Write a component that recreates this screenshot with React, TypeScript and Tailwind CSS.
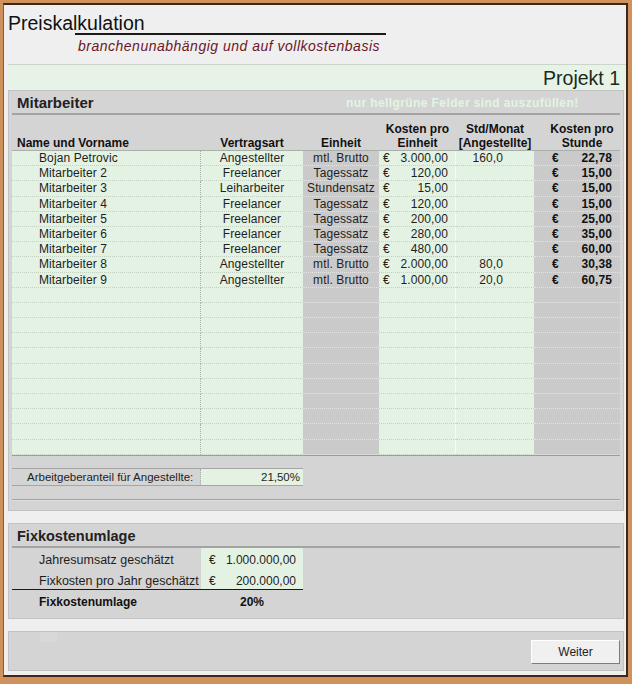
import React from "react";

const filled: string[][] = [
  ["Bojan Petrovic", "Angestellter", "mtl. Brutto", "3.000,00", "160,0", "22,78"],
  ["Mitarbeiter 2", "Freelancer", "Tagessatz", "120,00", "", "15,00"],
  ["Mitarbeiter 3", "Leiharbeiter", "Stundensatz", "15,00", "", "15,00"],
  ["Mitarbeiter 4", "Freelancer", "Tagessatz", "120,00", "", "15,00"],
  ["Mitarbeiter 5", "Freelancer", "Tagessatz", "200,00", "", "25,00"],
  ["Mitarbeiter 6", "Freelancer", "Tagessatz", "280,00", "", "35,00"],
  ["Mitarbeiter 7", "Freelancer", "Tagessatz", "480,00", "", "60,00"],
  ["Mitarbeiter 8", "Angestellter", "mtl. Brutto", "2.000,00", "80,0", "30,38"],
  ["Mitarbeiter 9", "Angestellter", "mtl. Brutto", "1.000,00", "20,0", "60,75"],
];
const rows: string[][] = [
  ...filled,
  ...Array.from({ length: 11 }, () => ["", "", "", "", "", ""]),
];

function Row({ r }: { r: string[] }) {
  const [name, typ, unit, cost, hrs, rate] = r;
  return (
    <>
      <div className="h-[15.2px] bg-[#e4f2e4] border-b border-r border-dotted border-b-[#c3d1c3] border-r-[#a7b0a7] pl-[27px] whitespace-nowrap">
        {name}
      </div>
      <div className="h-[15.2px] bg-[#e4f2e4] border-b border-dotted border-[#c3d1c3] text-center whitespace-nowrap">
        {typ}
      </div>
      <div className="h-[15.2px] bg-[#cacaca] border-b border-dotted border-[#e4e4e4] text-center whitespace-nowrap">
        {unit}
      </div>
      <div className="h-[15.2px] bg-[#e4f2e4] border-b border-dotted border-[#c3d1c3] shadow-[inset_-1px_0_0_#f6fbf6] flex justify-between pl-[4px] pr-[8px]">
        <span>{cost ? "€" : ""}</span>
        <span>{cost}</span>
      </div>
      <div className="h-[15.2px] bg-[#e4f2e4] border-b border-dotted border-[#c3d1c3] text-right pr-[31px]">
        {hrs}
      </div>
      <div className="h-[15.2px] bg-[#cacaca] border-b border-dotted border-[#e4e4e4] flex justify-between pl-[18px] pr-[8px] font-bold text-[#111]">
        <span>{rate ? "€" : ""}</span>
        <span>{rate}</span>
      </div>
    </>
  );
}

export default function App() {
  return (
    <div className="w-[632px] h-[684px] bg-[#d0925c] pt-[3px] pl-[3px] pr-[4px] pb-[7px] font-['Liberation_Sans',Arial,sans-serif] text-[#1e1e1e]">
      <div className="h-full bg-[#efefef] border-t-2 border-b-2 border-r-2 border-l border-[#3b2819] border-l-[#8c5a32] flex flex-col">
        {/* Title block */}
        <div className="h-[59px] shrink-0 flex flex-col">
          <div className="pt-[8px] pl-[4px] text-[19.5px] leading-[21px] text-[#111]">
            Preiskalkulation
          </div>
          <div className="ml-[71px] w-[311px] h-[2px] bg-[#1a1a1a] -mt-[1px]" />
          <div className="ml-[74px] mt-[3px] text-[14px] leading-[16px] italic tracking-[0.5px] text-[#6b1628] whitespace-nowrap">
            branchenunabhängig und auf vollkostenbasis
          </div>
        </div>
        <div className="ml-[4px] h-px shrink-0 bg-[#c9d6c9]" />
        <div className="ml-[4px] h-[25px] shrink-0 bg-[#e6f3e6] pt-[2px] pr-[6px] text-right text-[19.5px] leading-[23px] text-[#1b2a1b]">
          Projekt 1
        </div>

        {/* Mitarbeiter panel */}
        <div className="ml-[4px] mr-[2px] h-[421px] shrink-0 bg-[#d4d4d4] border border-[#c2c2c2] flex flex-col">
          <div className="h-[22px] pt-[2px] pl-[8px] flex leading-[20px] whitespace-nowrap">
            <span className="w-[329px] text-[15px] font-bold text-[#222]">Mitarbeiter</span>
            <span className="text-[12px] font-bold tracking-[0.4px] text-[#e2f5e2]">
              nur hellgrüne Felder sind auszufüllen!
            </span>
          </div>
          <div className="mx-[3px] h-[2px] bg-[#a3a3a3]" />
          <div className="mx-[3px] h-[35px] grid grid-cols-[189px_102px_76px_77px_78px_86px] items-end text-[12px] font-bold leading-[14px] text-[#111] whitespace-nowrap">
            <div className="pl-[5px]">Name und Vorname</div>
            <div className="text-center">Vertragsart</div>
            <div className="text-center">Einheit</div>
            <div className="text-center">
              Kosten pro
              <br />
              Einheit
            </div>
            <div className="text-center">
              Std/Monat
              <br />
              [Angestellte]
            </div>
            <div className="text-center pl-[10px]">
              Kosten pro
              <br />
              Stunde
            </div>
          </div>
          <div className="mx-[3px] border-t border-b border-t-[#a7b1a7] border-b-[#9c9c9c] grid grid-cols-[189px_102px_76px_77px_78px_86px] text-[12px] leading-[15px] tracking-[0.1px]">
            {rows.map((r, i) => (
              <Row key={i} r={r} />
            ))}
          </div>
          <div className="h-[12px]" />
          <div className="mx-[3px] w-[291px] h-[18px] grid grid-cols-[189px_102px] border-y border-[#a5a5a5] text-[11.5px] leading-[16px]">
            <div className="pl-[15px] border-r border-dotted border-[#a7b0a7] whitespace-nowrap">
              Arbeitgeberanteil für Angestellte:
            </div>
            <div className="bg-[#e4f2e4] text-right pr-[3px]">21,50%</div>
          </div>
          <div className="h-[13px]" />
          <div className="mx-[3px] h-[2px] border-t border-b border-t-[#a3a3a3] border-b-[#e0e0e0]" />
        </div>

        <div className="h-[12px] shrink-0" />

        {/* Fixkostenumlage panel */}
        <div className="ml-[4px] mr-[2px] h-[96px] shrink-0 bg-[#d4d4d4] border border-[#c2c2c2] flex flex-col">
          <div className="h-[22px] pt-[2px] pl-[8px] text-[14.5px] font-bold leading-[20px] text-[#222]">
            Fixkostenumlage
          </div>
          <div className="mx-[3px] h-[2px] bg-[#a3a3a3]" />
          <div className="mx-[3px] w-[291px] grid grid-cols-[189px_102px] text-[12.5px] leading-[18px]">
            <div className="h-[20.5px] pt-[3px] pl-[27px] whitespace-nowrap">Jahresumsatz geschätzt</div>
            <div className="h-[20.5px] pt-[3px] bg-[#e4f2e4] flex justify-between pl-[8px] pr-[7px] text-[12px]">
              <span>€</span>
              <span>1.000.000,00</span>
            </div>
            <div className="h-[20.5px] pt-[3px] pl-[27px] whitespace-nowrap">Fixkosten pro Jahr geschätzt</div>
            <div className="h-[20.5px] pt-[3px] bg-[#e4f2e4] flex justify-between pl-[8px] pr-[7px] text-[12px]">
              <span>€</span>
              <span>200.000,00</span>
            </div>
          </div>
          <div className="mx-[3px] w-[291px] h-px bg-[#1a1a1a]" />
          <div className="mx-[3px] w-[291px] h-[22px] grid grid-cols-[189px_102px] pt-[2px] text-[12px] font-bold leading-[20px] text-[#111]">
            <div className="pl-[27px]">Fixkostenumlage</div>
            <div className="text-center">20%</div>
          </div>
        </div>

        <div className="h-[12px] shrink-0" />

        {/* Bottom bar */}
        <div className="ml-[4px] mr-[2px] h-[40px] shrink-0 bg-[#d4d4d4] border border-[#c2c2c2] flex justify-between items-start">
          <div className="ml-[31px] w-[17px] h-[10px] bg-[#d8d8d8]" />
          <div className="mt-[8px] mr-[3px] w-[89px] h-[24px] bg-[#f0f0f0] border border-t-white border-l-white border-r-[#7c7c7c] border-b-[#7c7c7c] text-[12px] flex items-center justify-center text-[#222]">
            Weiter
          </div>
        </div>
      </div>
    </div>
  );
}
